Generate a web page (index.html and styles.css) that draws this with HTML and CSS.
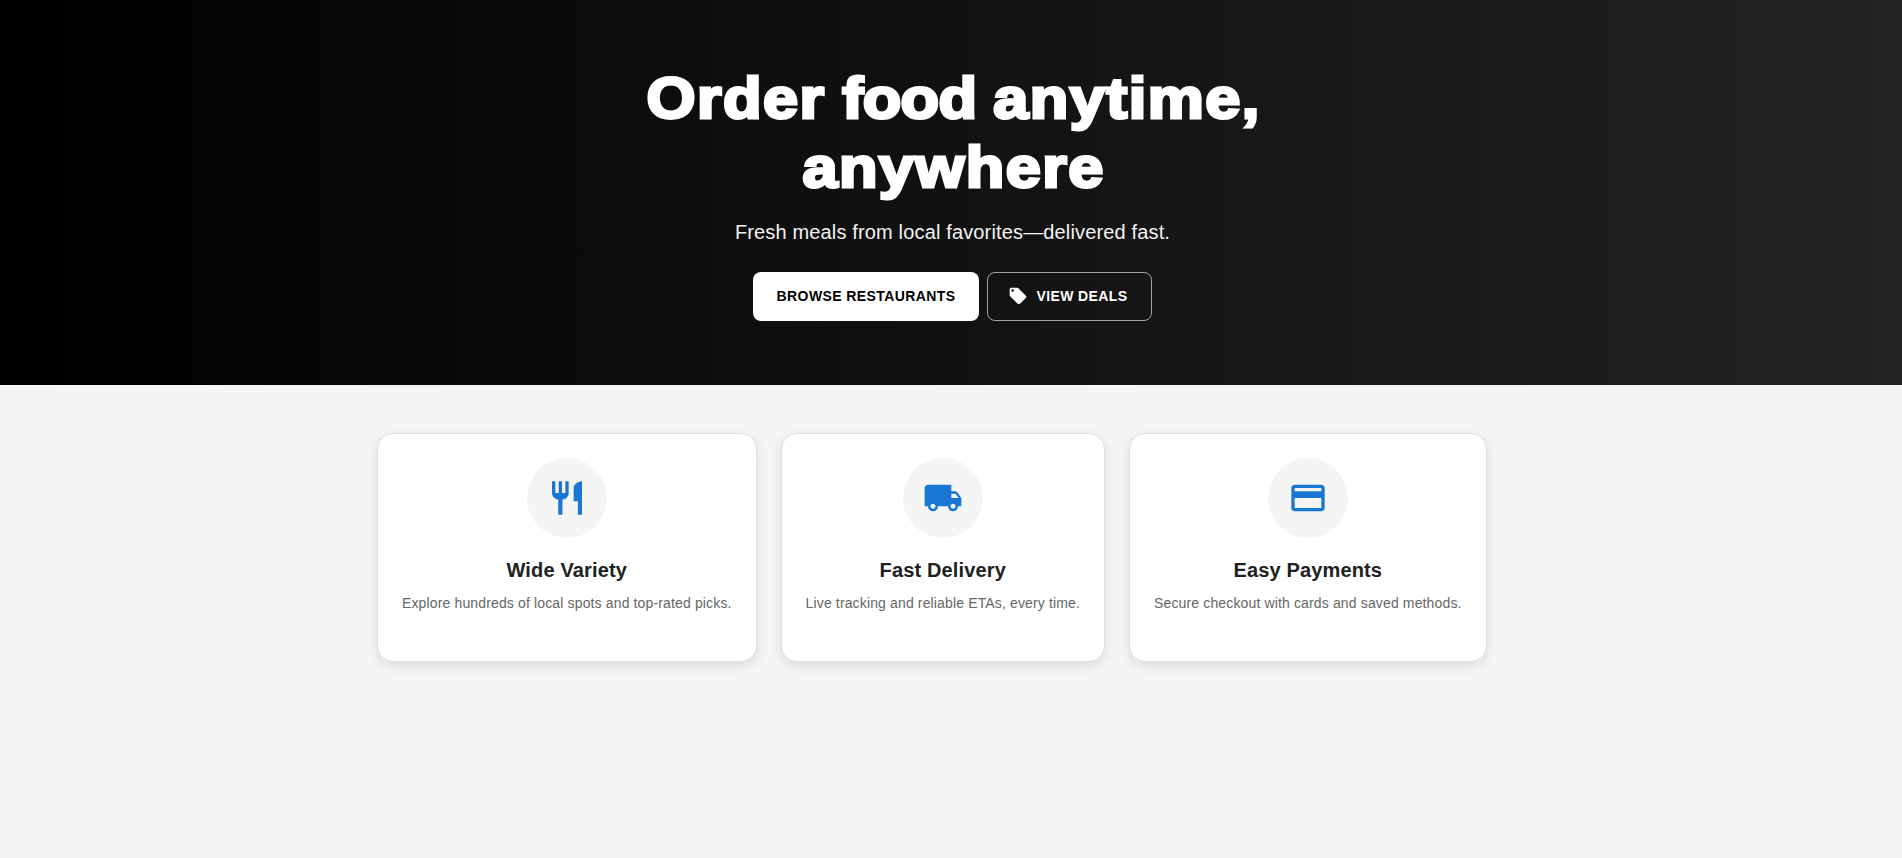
FILE: index.html
```html
<!DOCTYPE html>
<html lang="en">
<head>
<meta charset="utf-8">
<title>Order food</title>
<link rel="stylesheet" href="styles.css">
</head>
<body>
<section class="hero">
  <h1 class="title"><span class="line line-one">Order <span class="tight">food</span> anytime,</span><span class="line line-two">anywhere</span></h1>
  <p class="subtitle">Fresh meals from local favorites—delivered fast.</p>
  <div class="actions">
    <a class="btn btn-solid">Browse Restaurants</a>
    <a class="btn btn-outline"><svg class="btn-icon" viewBox="0 0 24 24"><path d="m21.41 11.58-9-9C12.05 2.22 11.55 2 11 2H4c-1.1 0-2 .9-2 2v7c0 .55.22 1.05.59 1.42l9 9c.36.36.86.58 1.41.58.55 0 1.05-.22 1.41-.59l7-7c.37-.36.59-.86.59-1.41 0-.55-.23-1.06-.59-1.42zM5.5 7C4.67 7 4 6.33 4 5.5S4.67 4 5.5 4 7 4.67 7 5.5 6.33 7 5.5 7z"/></svg>View Deals</a>
  </div>
</section>
<main class="features">
  <article class="card">
    <div class="badge"><svg class="icon" viewBox="0 0 24 24"><path d="M11 9H9V2H7v7H5V2H3v7c0 2.12 1.66 3.84 3.75 3.97V22h2.5v-9.03C11.34 12.84 13 11.12 13 9V2h-2v7zm5-3v8h2.5v8H21V2c-2.76 0-5 2.24-5 4z"/></svg></div>
    <h2 class="card-title">Wide Variety</h2>
    <p class="card-text">Explore hundreds of local spots and top-rated picks.</p>
  </article>
  <article class="card">
    <div class="badge"><svg class="icon" viewBox="0 0 24 24"><path d="M20 8h-3V4H3c-1.1 0-2 .9-2 2v11h2c0 1.66 1.34 3 3 3s3-1.34 3-3h6c0 1.66 1.34 3 3 3s3-1.34 3-3h2v-5l-3-4zM6 18.500c-.83 0-1.500-.67-1.500-1.500s.67-1.500 1.500-1.500 1.500.67 1.500 1.500-.67 1.500-1.500 1.500zm13.500-9 1.960 2.500H17V9.500h2.500zm-1.500 9c-.83 0-1.500-.67-1.500-1.500s.67-1.500 1.500-1.500 1.500.67 1.500 1.500-.67 1.500-1.500 1.500z"/></svg></div>
    <h2 class="card-title">Fast Delivery</h2>
    <p class="card-text">Live tracking and reliable ETAs, every time.</p>
  </article>
  <article class="card">
    <div class="badge"><svg class="icon" viewBox="0 0 24 24"><path d="M20 4H4c-1.110 0-1.990.89-1.990 2L2 18c0 1.110.89 2 2 2h16c1.110 0 2-.89 2-2V6c0-1.110-.89-2-2-2zm0 14H4v-6h16v6zm0-10H4V6h16v2z"/></svg></div>
    <h2 class="card-title">Easy Payments</h2>
    <p class="card-text">Secure checkout with cards and saved methods.</p>
  </article>
</main>
</body>
</html>
```

FILE: styles.css
```css
* { box-sizing: border-box; }
body { margin: 0; min-height: 100vh; background: #f5f5f5; font-family: "Liberation Sans", Arial, sans-serif; color: #212121; }
.hero { height: 385px; padding: 64px 0 0 3px; background: linear-gradient(90deg, #000, #232323); color: #fff; text-align: center; }
.title { margin: 0; font-weight: 700; font-size: 57.6px; line-height: 69px; letter-spacing: 1.3px; -webkit-text-stroke: 3px #fff; }
.line { display: block; padding-left: 2px; transform: scaleX(1.095); word-spacing: -2px; }
.tight { letter-spacing: -.5px; }
.subtitle { margin: 14px 0 24px; font-size: 20px; line-height: 32px; letter-spacing: .15px; opacity: .95; }
.actions { display: flex; justify-content: center; gap: 8px; }
.btn { display: flex; align-items: center; justify-content: center; height: 49px; padding-bottom: 1px; border-radius: 8px; font-size: 14px; font-weight: 700; letter-spacing: .4px; text-transform: uppercase; }
.btn-solid { width: 226px; background: #fff; color: #000; }
.btn-outline { width: 165px; padding-right: 3px; border: 1px solid rgba(255,255,255,.6); }
.btn-icon { width: 20px; height: 20px; margin-right: 8px; fill: currentColor; }
.features { display: flex; gap: 24px; width: 1152px; margin: 0 auto; padding: 48px 0 0 2px; }
.card { height: 229px; padding: 24px; border: 1px solid #e0e0e0; border-radius: 16px; background: #fff; box-shadow: 0 4px 12px rgba(0,0,0,.1); text-align: center; }
.badge { display: flex; align-items: center; justify-content: center; width: 80px; height: 80px; margin: 0 auto 16px; border-radius: 50%; background: #f5f5f5; }
.icon { width: 40px; height: 40px; fill: #1976d2; }
.card-title { margin: 0 0 7px; font-size: 20px; line-height: 32px; letter-spacing: .15px; }
.card-text { margin: 0; font-size: 14px; line-height: 20px; letter-spacing: .142px; color: #666; white-space: nowrap; }
```
